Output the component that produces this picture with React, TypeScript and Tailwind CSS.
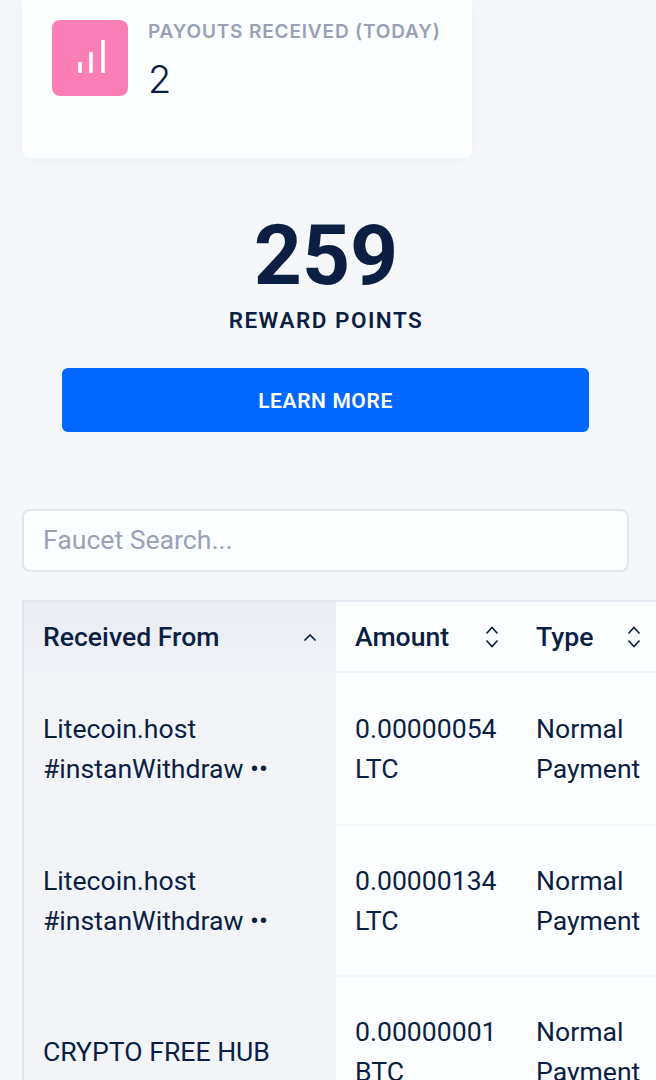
import React from 'react';

const rows = [
  { from: ['Litecoin.host', '#instanWithdraw ••'], amount: ['0.00000054', 'LTC'], height: 'h-[153px]' },
  { from: ['Litecoin.host', '#instanWithdraw ••'], amount: ['0.00000134', 'LTC'], height: 'h-[151px]' },
  { from: ['CRYPTO FREE HUB'], amount: ['0.00000001', 'BTC'], height: 'h-[151px]' },
];

const SortIcon = () => (
  <svg width="16" height="24" viewBox="0 0 16 24" fill="none" stroke="#0b1f44" strokeWidth="1.6" className="shrink-0">
    <path d="M2.500 8.500 8 2.500l5.500 6" />
    <path d="M2.500 15.500 8 21.500l5.500-6" />
  </svg>
);

const App = () => {
  return (
    <div className="h-[1080px] overflow-hidden bg-[#f5f7fb] font-['Roboto',sans-serif] text-[#0b1f44]">
      {/* Stat card */}
      <div className="ml-[22px] flex h-[158px] w-[450px] gap-5 rounded-b-lg bg-[#fcfdff] pl-[30px] pt-5 shadow-[0_2px_16px_rgba(30,50,110,0.03)]">
        <div className="flex h-[76px] w-[76px] items-center justify-center rounded-lg bg-[#fb7fb6]">
          <svg width="28" height="36" viewBox="0 0 28 36" fill="none" stroke="#ffffff" strokeWidth="3.6" className="ml-[2px] mt-[-2px]">
            <path d="M3 34V23" />
            <path d="M14 34V13" />
            <path d="M26 34V1" />
          </svg>
        </div>
        <div>
          <div className="mt-[2px] font-['Inter',sans-serif] text-[19px] font-semibold leading-[20px] tracking-[0.85px] text-[#98a1b5]">
            PAYOUTS RECEIVED (TODAY)
          </div>
          <div className="mt-[13px] font-['Inter',sans-serif] text-[38px] font-light leading-[48px]">2</div>
        </div>
      </div>

      {/* Reward points */}
      <div className="flex w-[652px] flex-col items-center pt-[48px]">
        <div className="text-[84px] font-bold leading-[100px]">259</div>
        <div className="text-[22.500px] font-semibold leading-[28px] tracking-[1.500px]">REWARD POINTS</div>
      </div>
      <div className="ml-[62px] mt-[34px] flex h-[64px] w-[527px] items-center justify-center rounded-md bg-[#0068ff] pt-[3px] text-[21px] font-semibold tracking-[0.6px] text-white">
        LEARN MORE
      </div>

      {/* Search */}
      <input
        placeholder="Faucet Search..."
        className="ml-[22px] mt-[77px] block h-[63px] w-[607px] rounded-lg border-2 border-[#e2e6ee] bg-[#fcfdff] px-[19px] pb-[2px] text-[26.600px] placeholder:text-[#9aa2b4] focus:outline-none"
      />

      {/* Table */}
      <div className="ml-[22px] mt-[28px] overflow-hidden">
        <table className="w-[760px] table-fixed border-separate border-spacing-0 border-l-2 border-t-2 border-[#e3e6f0] bg-[#fcfdff] text-[26.600px] leading-[40px]">
          <colgroup>
            <col className="w-[312px]" />
            <col className="w-[182px]" />
            <col className="w-[266px]" />
          </colgroup>
          <thead>
            <tr className="h-[71px] text-left">
              <th className="bg-gradient-to-b from-[#eaecf3] to-[#f0f2f7] pb-[2px] pl-[19px] pr-[18px] font-medium">
                <div className="flex items-center justify-between">
                  <span>Received From</span>
                  <svg width="16" height="10" viewBox="0 0 16 10" fill="none" stroke="#0b1f44" strokeWidth="1.6">
                    <path d="M2.500 8.500 8 3l5.500 5.500" />
                  </svg>
                </div>
              </th>
              <th className="border-b-2 border-[#f0f2f7] pl-[19px] pr-[18px] font-medium">
                <div className="flex items-center justify-between">
                  <span>Amount</span>
                  <SortIcon />
                </div>
              </th>
              <th className="border-b-2 border-[#f0f2f7] pl-[18px] font-medium">
                <div className="flex w-[106px] items-center justify-between">
                  <span>Type</span>
                  <SortIcon />
                </div>
              </th>
            </tr>
          </thead>
          <tbody>
            {rows.map((row, i) => (
              <tr key={i} className={row.height}>
                <td className="bg-[#f2f4f8] pb-[2px] pl-[19px] pr-4 align-middle">
                  {row.from.map((line) => (
                    <div key={line}>{line}</div>
                  ))}
                </td>
                <td className="border-b-2 border-[#f3f5f9] pl-[19px] align-middle">
                  {row.amount.map((line) => (
                    <div key={line}>{line}</div>
                  ))}
                </td>
                <td className="border-b-2 border-[#f3f5f9] pl-[18px] align-middle">
                  <div>Normal</div>
                  <div>Payment</div>
                </td>
              </tr>
            ))}
          </tbody>
        </table>
      </div>
    </div>
  );
};

export default App;
